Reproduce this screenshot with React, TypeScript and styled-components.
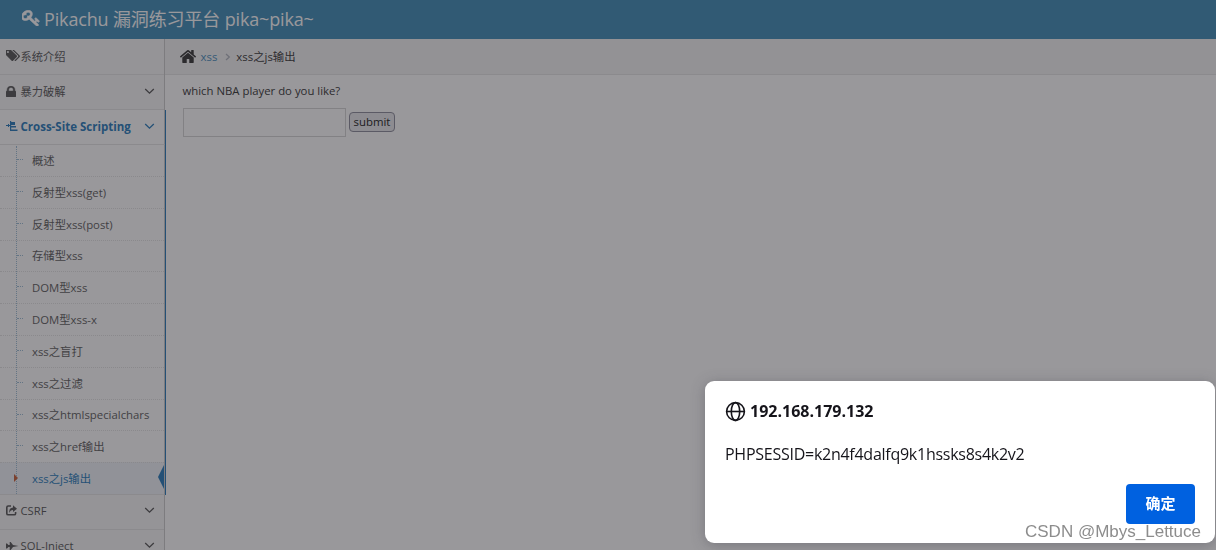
import React from 'react'
import styled, { createGlobalStyle, css } from 'styled-components'

const GlobalStyle = createGlobalStyle`
  * {
    box-sizing: border-box;
  }

  body {
    margin: 0;
    overflow: hidden;
    background: #fff;
    color: #393939;
    font-family: 'Open Sans', 'Noto Sans CJK SC', sans-serif;
    font-size: 11.7px;
  }
`

const Page = styled.div`
  display: flex;
  flex-direction: column;
  height: 550px;
  overflow: hidden;
`

const Navbar = styled.header`
  flex: none;
  display: flex;
  align-items: center;
  gap: 4px;
  height: 39px;
  padding: 0 0 4px 22px;
  background: #438eb9;
  color: #fff;
  font-size: 18px;
  letter-spacing: -0.15px;
  white-space: nowrap;
`

const Body = styled.div`
  flex: 1;
  display: flex;
  min-height: 0;
`

const Sidebar = styled.nav`
  flex: none;
  width: 166px;
  overflow: hidden;
`

const Group = styled.div<{ $open?: boolean }>`
  width: ${p => (p.$open ? 166 : 165)}px;
  border-right: 1px solid ${p => (p.$open ? '#2b7dbc' : '#ccc')};
`

const MenuItem = styled.div<{ $active?: boolean; $first?: boolean }>`
  display: flex;
  align-items: center;
  height: ${p => (p.$first ? 36 : 35)}px;
  padding: 0 9px 2px 6px;
  border-bottom: 1px solid #e5e5e5;
  background: #f8f8f8;
  color: #585858;
  font-size: 11.25px;
  white-space: nowrap;

  ${p =>
    p.$active &&
    css`
      border-right: 1px solid #ccc;
      background: #fff;
      color: #2b7dbc;
      font-size: 11.5px;
      font-weight: 700;
    `}
`

const MenuIcon = styled.span`
  display: flex;
  width: 14.5px;
`

const MenuLabel = styled.span`
  flex: 1;
`

const Submenu = styled.div`
  position: relative;
  border-right: 1px solid #ccc;
  border-bottom: 1px solid #e5e5e5;

  &:before {
    content: '';
    position: absolute;
    z-index: 1;
    top: 1px;
    bottom: 0;
    left: 16px;
    border-left: 1px dotted #9dbdd6;
  }
`

const SubItem = styled.div<{ $active?: boolean }>`
  position: relative;
  display: flex;
  align-items: center;
  height: 31.8px;
  padding: 0 0 1px 32px;
  border-top: 1px dotted #e4e4e4;
  color: ${p => (p.$active ? '#2b7dbc' : '#616161')};
  background: ${p => (p.$active ? '#f1f5fa' : '#fff')};
  font-size: 11.35px;
  white-space: nowrap;

  &:first-child {
    height: 31px;
    border-top: none;
  }

  &:before {
    content: '';
    position: absolute;
    top: 14px;
    left: 17px;
    width: 6px;
    border-top: 1px dotted #9dbdd6;
    display: ${p => (p.$active ? 'none' : 'block')};
  }
`

const Caret = styled.span`
  position: absolute;
  z-index: 2;
  left: 14px;
  top: 11px;
  border: 4px solid transparent;
  border-left-color: #c86139;
  border-right-width: 0;
`

const ActiveArrow = styled.span`
  position: absolute;
  right: 0;
  top: 2px;
  border: 12px solid transparent;
  border-right: 6px solid #2b7dbc;
  border-left-width: 0;
`

const Main = styled.main`
  flex: 1;
`

const Breadcrumbs = styled.div`
  display: flex;
  align-items: center;
  height: 36px;
  padding-left: 15px;
  margin-left: -1px;
  border-bottom: 1px solid #e5e5e5;
  background: #f5f5f5;
  color: #393939;
  font-size: 11.4px;
`

const Crumb = styled.span`
  margin: 0 8px 0 4.5px;
  color: #4c8fbd;
`

const Current = styled.span`
  margin: 0 0 1px 5px;
`

const Content = styled.div`
  padding: 7px 17px;
`

const Question = styled.p`
  margin: 0 0 9px -0.5px;
  line-height: 17px;
  font-size: 11.35px;
`

const Form = styled.form`
  display: flex;
  align-items: center;
  gap: 3px;
`

const TextInput = styled.input`
  width: 163px;
  height: 29px;
  border: 1px solid #d5d5d5;
  background: #fff;
`

const Submit = styled.button`
  width: 46px;
  height: 20px;
  margin-bottom: 1px;
  padding: 0;
  border: 1px solid #8f8f9d;
  border-radius: 4px;
  background: #e9e9ed;
  color: #222;
  font: 11.4px/16px 'Open Sans', sans-serif;
`

const Overlay = styled.div`
  position: fixed;
  z-index: 3;
  inset: 0;
  background: rgba(28, 27, 34, 0.45);
`

const Dialog = styled.section`
  position: fixed;
  z-index: 4;
  left: 705px;
  top: 381px;
  display: flex;
  flex-direction: column;
  width: 510px;
  height: 162px;
  padding: 19px 20px;
  border-radius: 9px;
  background: #fff;
  box-shadow: 0 2px 14px rgba(58, 57, 68, 0.35);
  color: #15141a;
`

const Origin = styled.div`
  display: flex;
  align-items: center;
  gap: 4px;
  height: 22px;
  font-weight: 700;
  font-size: 16px;
`

const Message = styled.div`
  margin-top: 21px;
  line-height: 22px;
  font-size: 16px;
  letter-spacing: -0.26px;
  white-space: nowrap;
`

const Confirm = styled.button`
  align-self: flex-end;
  width: 69px;
  height: 40px;
  margin-top: 19px;
  padding: 0 0 3px;
  border: none;
  border-radius: 4px;
  background: #0061e0;
  color: #fff;
  font: 700 15px 'Noto Sans CJK SC', sans-serif;
`

const Watermark = styled.div`
  position: fixed;
  z-index: 5;
  right: 15px;
  top: 522px;
  color: rgba(120, 120, 120, 0.85);
  font: 17px/20px 'Liberation Sans', sans-serif;
  white-space: nowrap;
`

const paths = {
  key: 'M832 512q0-80-56-136t-136-56-136 56-56 136q0 42 19 83-41-19-83-19-80 0-136 56t-56 136 56 136 136 56 136-56 56-136q0-42-19-83 41 19 83 19 80 0 136-56t56-136zm851 704q0 17-49 66t-66 49q-9 0-28.5-16t-36.5-33-38.5-40-24.5-26l-96 96 220 220q28 28 28 68 0 42-39 81t-81 39q-40 0-68-28l-671-671q-176 131-365 131-163 0-265.5-102.5t-102.5-265.5q0-160 95-313t248-248 313-95q163 0 265.5 102.5t102.5 265.5q0 189-131 365l355 355 96-96q-3-3-26-24.5t-40-38.5-33-36.5-16-28.5q0-17 49-66t66-49q13 0 23 10 6 6 46 44.5t82 79.5 86.5 86 73 78 28.5 41z',
  tags: 'M384 448q0-53-37.5-90.5t-90.5-37.5-90.5 37.5-37.5 90.5 37.5 90.5 90.5 37.5 90.5-37.5 37.5-90.5zm1067 576q0 53-37 90l-491 492q-39 37-91 37-53 0-90-37l-715-716q-38-37-64.5-101t-26.5-117v-416q0-52 38-90t90-38h416q53 0 117 26.5t102 64.5l715 714q37 39 37 91zm384 0q0 53-37 90l-491 492q-39 37-91 37-36 0-59-14t-53-45l470-470q37-37 37-90 0-52-37-91l-715-714q-38-38-102-64.5t-117-26.5h224q53 0 117 26.5t102 64.5l715 714q37 39 37 91z',
  lock: 'M640 768h512v-192q0-106-75-181t-181-75-181 75-75 181v192zm832 96v576q0 40-28 68t-68 28h-960q-40 0-68-28t-28-68v-576q0-40 28-68t68-28h32v-192q0-184 132-316t316-132 316 132 132 316v192h32q40 0 68 28t28 68z',
  home: 'M1472 992v480q0 26-19 45t-45 19h-384v-384h-256v384h-384q-26 0-45-19t-19-45v-480q0-1 .5-3t.5-3l575-474 575 474q1 2 1 6zm223-69l-62 74q-8 9-21 11h-3q-13 0-21-7l-692-577-692 577q-12 8-24 7-13-2-21-11l-62-74q-8-10-7-23.5t11-21.5l719-599q32-26 76-26t76 26l244 204v-195q0-14 9-23t23-9h192q14 0 23 9t9 23v408l219 182q10 8 11 21.5t-7 23.5z',
}

type GlyphProps = { d: string; box: string; width: number; height: number; weight?: number }

const Glyph = ({ d, box, width, height, weight = 0 }: GlyphProps) => (
  <svg
    width={width}
    height={height}
    viewBox={box}
    preserveAspectRatio="none"
    fill="currentColor"
    stroke="currentColor"
    strokeWidth={weight}
  >
    <path d={d} />
  </svg>
)

const ScriptIcon = () => (
  <svg width="12" height="11" viewBox="0 0 12 11" fill="currentColor">
    <path d="M0 4h4v1H0zM4 0h1.2v10H4zM5 1h4v3H5zM5 5h5v1.500H5zM5 8.500h6.500V10H5zM2 3h1v3H2z" />
  </svg>
)

const ShareIcon = () => (
  <svg width="11" height="11" viewBox="0 0 11 11" fill="none" stroke="currentColor">
    <path d="M5 1H2.200Q.8 1 .8 2.400v6Q.8 9.800 2.200 9.800h6q1.400 0 1.400-1.400V7" strokeWidth="1.600" />
    <path d="M3.400 8Q2.400 3 7 2.600V.3L11 3.800 7 7V5Q4.200 5 3.400 8z" fill="currentColor" stroke="none" />
  </svg>
)

const JetIcon = () => (
  <svg width="13" height="10" viewBox="0 0 13 10" fill="currentColor">
    <path d="M0 2.500h1L2.500 4h1.200V1h1L7 4l5.500 1L7 6 4.700 9h-1V6H2.500L1 7.500H0z" />
  </svg>
)

const Chevron = () => (
  <svg width="11" height="7" viewBox="0 0 11 7" fill="none" stroke="currentColor" strokeWidth="1.300">
    <path d="M1.200 1l4.300 4.200L9.800 1" />
  </svg>
)

const Globe = () => (
  <svg width="21" height="21" viewBox="0 0 21 21" fill="none" stroke="#15141a" strokeWidth="1.600">
    <circle cx="10.500" cy="10.500" r="8.900" />
    <ellipse cx="10.500" cy="10.500" rx="4.200" ry="8.900" />
    <path d="M1.600 10.500h17.800" />
  </svg>
)

const lessons = [
  '概述',
  '反射型xss(get)',
  '反射型xss(post)',
  '存储型xss',
  'DOM型xss',
  'DOM型xss-x',
  'xss之盲打',
  'xss之过滤',
  'xss之htmlspecialchars',
  'xss之href输出',
  'xss之js输出',
]

const App = () => (
  <>
    <GlobalStyle />
    <Page>
      <Navbar>
        <Glyph d={paths.key} box="70 100 1660 1600" width={18} height={16} weight={60} />
        Pikachu 漏洞练习平台 pika~pika~
      </Navbar>
      <Body>
        <Sidebar>
          <Group>
            <MenuItem $first>
              <MenuIcon>
                <Glyph d={paths.tags} box="0 190 1840 1460" width={14} height={11} />
              </MenuIcon>
              <MenuLabel>系统介绍</MenuLabel>
            </MenuItem>
            <MenuItem>
              <MenuIcon>
                <Glyph d={paths.lock} box="320 128 1152 1408" width={10} height={11} weight={50} />
              </MenuIcon>
              <MenuLabel>暴力破解</MenuLabel>
              <Chevron />
            </MenuItem>
          </Group>
          <Group $open>
            <MenuItem $active>
              <MenuIcon>
                <ScriptIcon />
              </MenuIcon>
              <MenuLabel>Cross-Site Scripting</MenuLabel>
              <Chevron />
            </MenuItem>
            <Submenu>
              {lessons.map((lesson, i) => {
                const active = i === lessons.length - 1
                return (
                  <SubItem key={lesson} $active={active}>
                    {active && <Caret />}
                    {lesson}
                    {active && <ActiveArrow />}
                  </SubItem>
                )
              })}
            </Submenu>
          </Group>
          <Group>
            <MenuItem>
              <MenuIcon>
                <ShareIcon />
              </MenuIcon>
              <MenuLabel>CSRF</MenuLabel>
              <Chevron />
            </MenuItem>
            <MenuItem>
              <MenuIcon>
                <JetIcon />
              </MenuIcon>
              <MenuLabel>SQL-Inject</MenuLabel>
              <Chevron />
            </MenuItem>
          </Group>
        </Sidebar>
        <Main>
          <Breadcrumbs>
            <Glyph d={paths.home} box="90 250 1612 1290" width={16} height={13} />
            <Crumb>xss</Crumb>
            <svg width="6" height="8" viewBox="0 0 6 8" fill="none" stroke="#b2b6bf" strokeWidth="1.300">
              <path d="M1 1l3.300 3L1 7" />
            </svg>
            <Current>xss之js输出</Current>
          </Breadcrumbs>
          <Content>
            <Question>which NBA player do you like?</Question>
            <Form>
              <TextInput />
              <Submit type="button">submit</Submit>
            </Form>
          </Content>
        </Main>
      </Body>
    </Page>
    <Overlay />
    <Dialog>
      <Origin>
        <Globe />
        192.168.179.132
      </Origin>
      <Message>PHPSESSID=k2n4f4dalfq9k1hssks8s4k2v2</Message>
      <Confirm>确定</Confirm>
    </Dialog>
    <Watermark>CSDN @Mbys_Lettuce</Watermark>
  </>
)

export default App
